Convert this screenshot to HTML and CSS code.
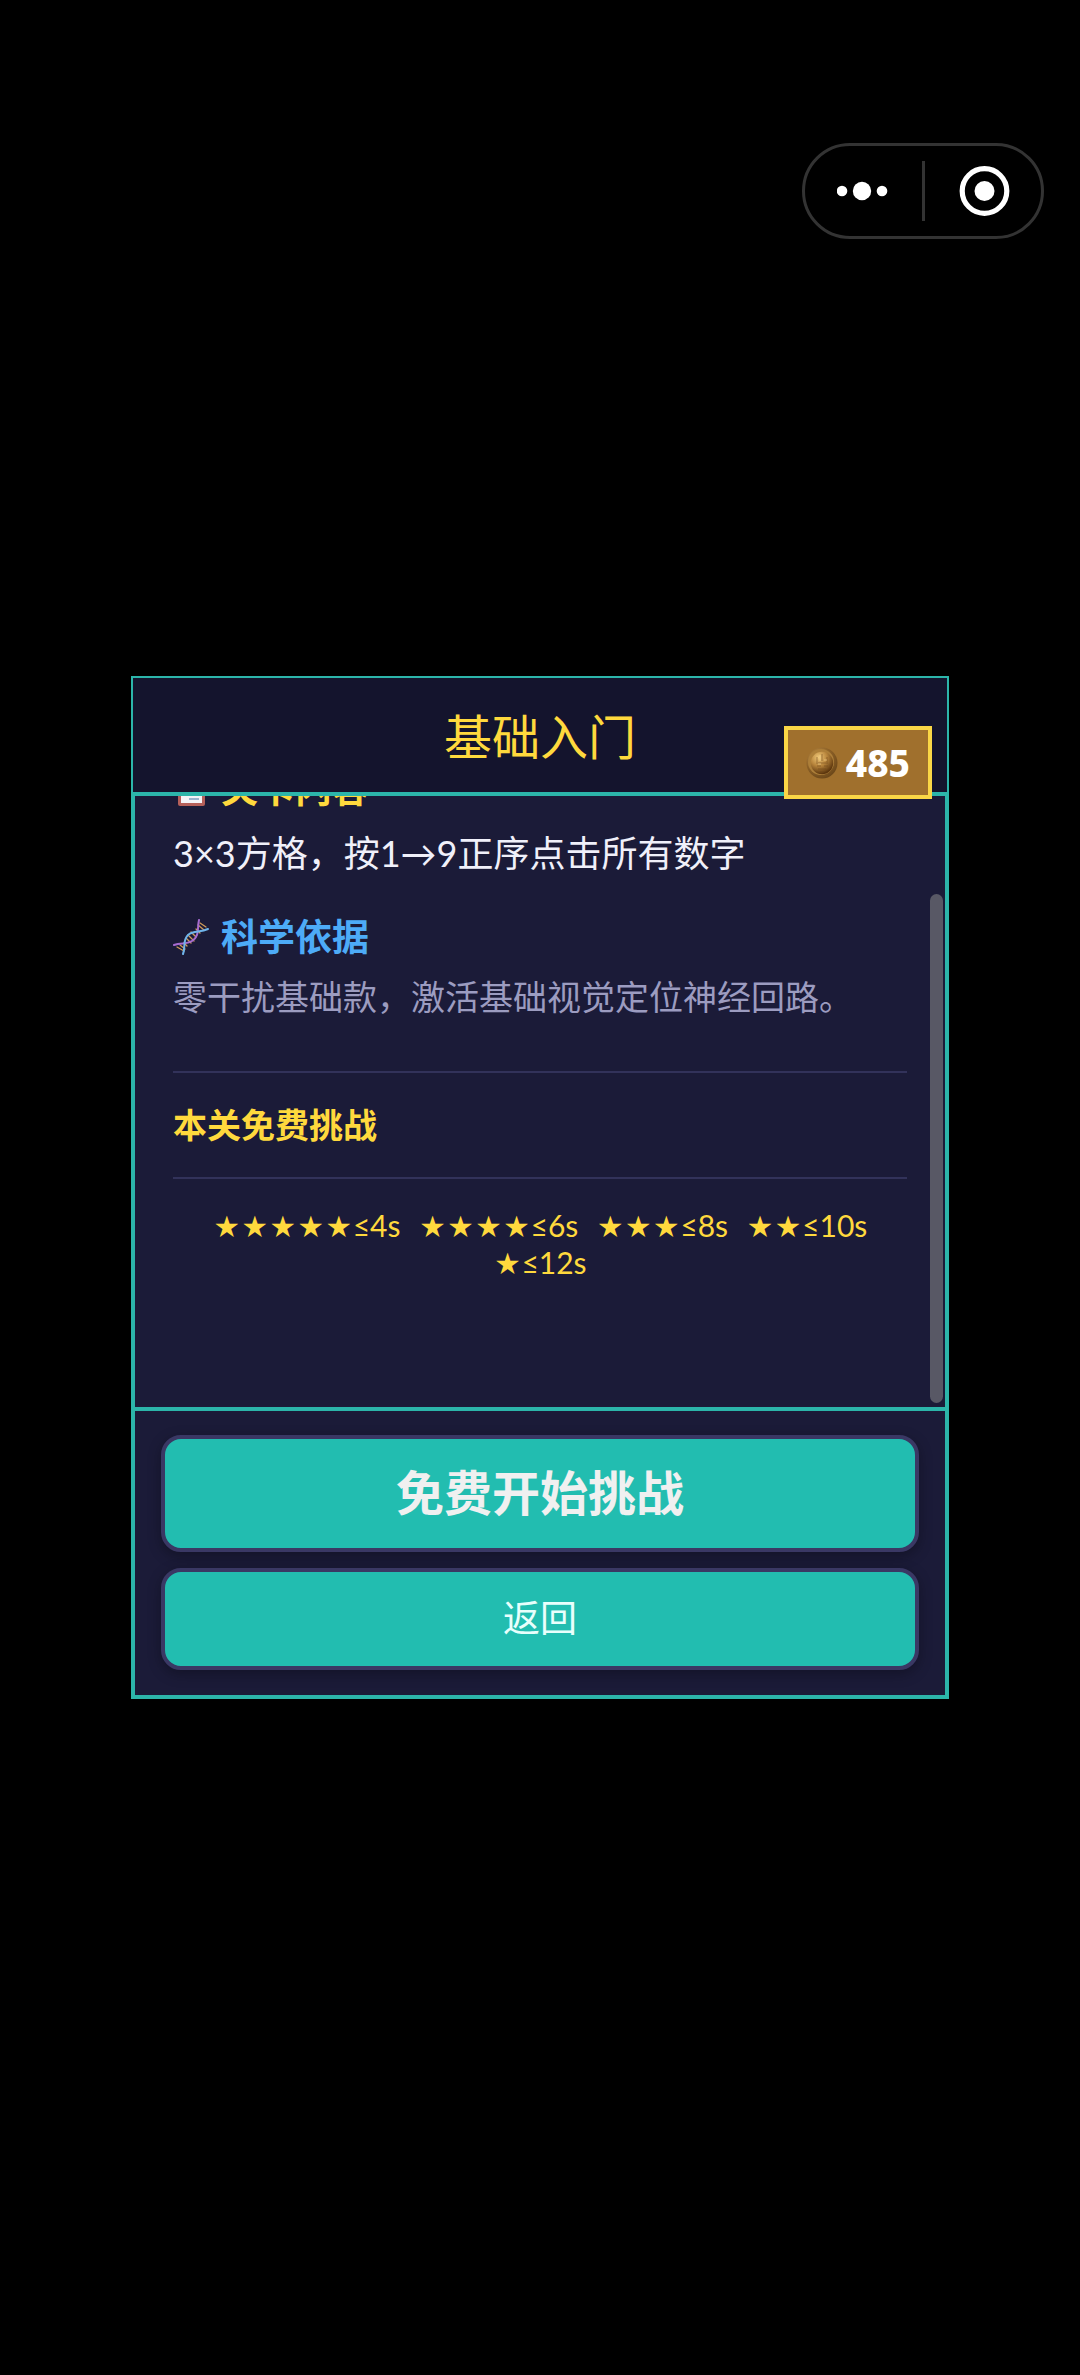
FILE: index.html
```html
<!DOCTYPE html>
<html lang="zh-CN">
<head>
<meta charset="utf-8">
<meta name="viewport" content="width=device-width, initial-scale=1">
<title>基础入门</title>
<link rel="stylesheet" href="styles.css">
</head>
<body>
<nav class="capsule">
  <button class="capsule-btn" type="button" aria-label="更多">
    <svg width="52" height="20" viewBox="0 0 52 20" fill="#fff"><circle cx="5" cy="10" r="5.3"/><circle cx="25" cy="10" r="9.2"/><circle cx="45" cy="10" r="5.3"/></svg>
  </button>
  <button class="capsule-btn" type="button" aria-label="关闭">
    <svg width="54" height="52" viewBox="0 0 54 52"><circle cx="28.5" cy="26" r="22.3" fill="none" stroke="#fff" stroke-width="5.2"/><circle cx="28.5" cy="26" r="10" fill="#fff"/></svg>
  </button>
</nav>

<main class="card">
  <header class="card-head">
    <h1 class="title">基础入门</h1>
  </header>
  <div class="coins">
    <svg class="coin" width="32" height="32" viewBox="0 0 32 32">
      <defs>
        <radialGradient id="rim" cx=".35" cy=".3" r=".75"><stop offset="0" stop-color="#c09048"/><stop offset=".6" stop-color="#8a5f26"/><stop offset="1" stop-color="#6b4719"/></radialGradient>
        <radialGradient id="face" cx=".35" cy=".25" r=".75"><stop offset="0" stop-color="#f0c878"/><stop offset=".5" stop-color="#b8853c"/><stop offset="1" stop-color="#5c360d"/></radialGradient>
      </defs>
      <circle cx="16" cy="16" r="15.5" fill="url(#rim)"/>
      <circle cx="15" cy="15" r="13" fill="#ad7f39"/>
      <circle cx="16" cy="16" r="11.2" fill="url(#face)"/>
      <path d="M16 7v7M11 10v5M21 10v5M10 16h12M11 19h4M18 19h4M12 22h8M14 25h4" stroke="#70471a" stroke-width="1" fill="none" opacity=".55"/>
      <path d="M14 8v6M12 17h3M18 13h3" stroke="#f3d28c" stroke-width="1" fill="none" opacity=".7"/>
    </svg>
    <span>485</span>
  </div>

  <section class="card-body">
    <div class="block">
      <h2 class="label label-gold">
        <svg class="icon" viewBox="0 0 36 36"><rect x="5" y="3" width="27" height="32" rx="2" fill="#b5605a"/><rect x="8" y="7" width="21" height="25" fill="#f4f4f8"/><rect x="13" y="1" width="11" height="7" rx="2" fill="#9aa3ad"/><path d="M12 13h13M12 17h13M12 21h13M16 28h10" stroke="#7f9fc0" stroke-width="1.6"/></svg>
        关卡内容
      </h2>
      <p class="rule">3×3方格，按1→9正序点击所有数字</p>
    </div>
    <div class="block">
      <h2 class="label label-blue">
        <svg class="icon" viewBox="0 0 36 36" fill="none" stroke-linecap="round">
          <path d="M4 28l7 4M7 26l5 4M11 24l3 3M15 16l6 6M13 19l5 5M18 13l5 5M23 10l4 4M25 6l6 5M27 4l6 4" stroke="#cf9a58" stroke-width="1.3"/>
          <path d="M1 26c7-3 12 0 18-4 8-5 5-13 7-21" stroke="#a66bd0" stroke-width="2"/>
          <path d="M10 35c3-7-1-13 5-19 6-5 12-2 20-6" stroke="#6fb4ea" stroke-width="2"/>
        </svg>
        科学依据
      </h2>
      <p class="note">零干扰基础款，激活基础视觉定位神经回路。</p>
    </div>
    <h2 class="free">本关免费挑战</h2>
    <ul class="goals">
      <li><span class="stars"><i>★</i><i>★</i><i>★</i><i>★</i><i>★</i></span>≤4s</li>
      <li><span class="stars"><i>★</i><i>★</i><i>★</i><i>★</i></span>≤6s</li>
      <li><span class="stars"><i>★</i><i>★</i><i>★</i></span>≤8s</li>
      <li><span class="stars"><i>★</i><i>★</i></span>≤10s</li>
      <li><span class="stars"><i>★</i></span>≤12s</li>
    </ul>
    <span class="thumb"></span>
  </section>

  <footer class="card-foot">
    <button class="btn btn-main" type="button">免费开始挑战</button>
    <button class="btn" type="button">返回</button>
  </footer>
</main>
</body>
</html>
```
FILE: styles.css
```css
* { box-sizing: border-box; }

body {
  margin: 0;
  min-height: 100vh;
  padding: 0 131px;
  display: flex;
  align-items: center;
  background: #000;
  color: #f0f0fa;
  font-family: Lato, "Noto Sans CJK SC", sans-serif;
}

h1, h2, p, ul { margin: 0; padding: 0; }

button { font-family: inherit; cursor: pointer; }

/* system capsule floating over the page */
.capsule {
  position: absolute;
  top: 143px;
  right: 36px;
  width: 242px;
  height: 96px;
  display: flex;
  align-items: center;
  border: 3px solid #333;
  border-radius: 48px;
}

.capsule-btn {
  flex: 1;
  height: 60px;
  padding: 0;
  display: flex;
  align-items: center;
  justify-content: center;
  background: none;
  border: 0;
}

.capsule-btn + .capsule-btn { border-left: 3px solid #333; }

.card {
  position: relative;
  flex: 1;
  min-width: 0;
  background: #1b1b38;
}

.card-head {
  padding: 24px 0 20px;
  background: #14142d;
  border: 2px solid #2cb5aa;
  border-bottom: 0;
  text-align: center;
}

.title {
  color: #ffd93d;
  font-size: 48px;
  font-weight: 400;
  line-height: 70px;
}

.coins {
  position: absolute;
  z-index: 1;
  top: 50px;
  right: 17px;
  display: flex;
  align-items: center;
  gap: 8px;
  padding: 8px 18px;
  background: #a0702d;
  border: 4px solid #fad646;
  color: #fff;
  font-family: "Noto Sans", sans-serif;
  font-size: 37px;
  font-weight: 800;
  line-height: 49px;
}

.card-body {
  position: relative;
  height: 619px;
  padding: 0 38px 126px;
  display: flex;
  flex-direction: column;
  justify-content: flex-end;
  overflow: hidden;
  border: 4px solid #2cb5aa;
}

.block { flex: none; margin-bottom: 32px; }

.label {
  display: flex;
  align-items: center;
  gap: 12px;
  margin-bottom: 12px;
  font-size: 37px;
  font-weight: 700;
  line-height: 48px;
}

.label-gold { color: #ffd93d; }
.label-blue { color: #4dabf7; }

.icon { width: 36px; height: 36px; }

.rule { font-size: 36px; line-height: 56px; }

.note { color: #9c9cc0; font-size: 34px; line-height: 48px; }

.free {
  margin-top: 18px;
  padding: 28px 0;
  border: solid #32325a;
  border-width: 2px 0;
  color: #ffd93d;
  font-size: 34px;
  font-weight: 700;
  line-height: 48px;
}

.goals {
  display: flex;
  flex-wrap: wrap;
  justify-content: center;
  column-gap: 18px;
  padding-top: 28px;
  list-style: none;
  color: #ffd93d;
  font-size: 30px;
  line-height: 37px;
}

.goals li { display: flex; }

.stars { display: flex; font-size: 24px; }

.stars i {
  width: 28px;
  font-style: normal;
  text-align: center;
}

.thumb {
  position: absolute;
  top: 98px;
  right: 2px;
  bottom: 4px;
  width: 13px;
  border-radius: 7px;
  background: #585865;
}

.card-foot {
  display: flex;
  flex-direction: column;
  gap: 16px;
  padding: 24px 26px 25px;
  border: 4px solid #2cb5aa;
  border-top: 0;
}

.btn {
  padding: 18px 19px 20px;
  background: #22bdb0;
  border: 4px solid #3a3864;
  border-radius: 20px;
  box-shadow: 0 4px 14px rgba(0, 0, 0, .3);
  color: #e8fffc;
  font-size: 37px;
  line-height: 56px;
}

.btn-main {
  color: #f0f0f0;
  font-size: 48px;
  font-weight: 700;
  line-height: 71px;
}
```
